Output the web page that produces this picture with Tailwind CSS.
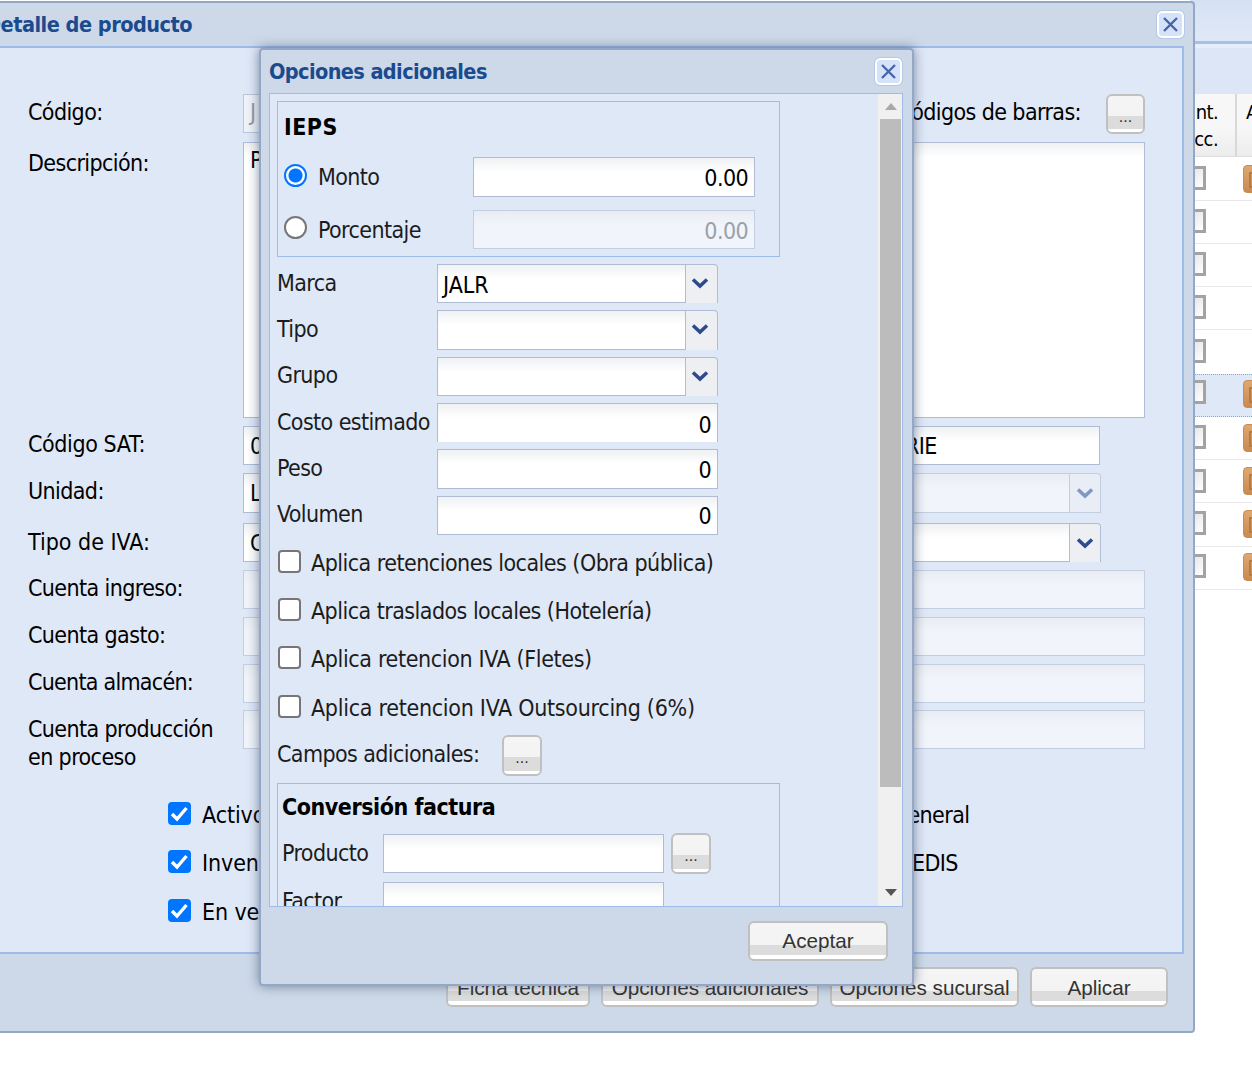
<!DOCTYPE html>
<html lang="es">
<head>
<meta charset="utf-8">
<title>Detalle de producto</title>
<script src="https://cdn.jsdelivr.net/npm/@tailwindcss/browser@4"></script>
</head>
<body class="bg-white">
<div class="relative w-[1252px] h-[1069px] overflow-hidden bg-white font-['DejaVu_Sans_Condensed','DejaVu_Sans',sans-serif] text-[23px] tracking-[-0.6px] text-black">

  <!-- background window -->
  <div class="absolute left-[1190px] top-0 w-[62px] h-[600px] flex flex-col">
    <div class="h-[41px] shrink-0 bg-[linear-gradient(#d5e1f2,#dfe8f7)]"></div>
    <div class="h-[3px] shrink-0 bg-[#a5c1e7]"></div>
    <div class="h-[4px] shrink-0 bg-[#e6eefa]"></div>
    <div class="h-[46px] shrink-0 bg-[#dce6f6]"></div>
    <div class="h-[63px] shrink-0 flex bg-[linear-gradient(#f7f7f7_0,#f7f7f7_55%,#ececec_100%)] border-b border-[#dcdcdc] text-[20px] leading-[27px]">
      <div class="w-[47px] shrink-0 border-r-2 border-[#d8d8d8] pt-[5px] text-right pr-[17px] overflow-hidden whitespace-nowrap">nt.<br>cc.</div>
      <div class="pl-[9px] pt-[5px] shrink-0">A</div>
    </div>
    <div class="h-[44px] shrink-0 flex items-center justify-between border-b border-[#e8e8e8]">
      <div class="w-[24px] h-[24px] -ml-[8px] -mt-[2px] border-[3px] border-[#a3a3a3] bg-[linear-gradient(135deg,#dedede,#fff)]"></div>
      <div class="w-[26px] h-[28px] -mr-[17px] rounded-[4px] bg-[linear-gradient(#dfa871,#c98a50)] border border-[#c88c55] pl-[5px] pt-[6px]"><div class="w-[12px] h-[16px] border-2 border-[#b57a45]"></div></div>
    </div>
    <div class="h-[43px] shrink-0 flex items-center border-b border-[#e8e8e8]"><div class="w-[24px] h-[24px] -ml-[8px] -mt-[3px] border-[3px] border-[#a3a3a3] bg-[linear-gradient(135deg,#dedede,#fff)]"></div></div>
    <div class="h-[43px] shrink-0 flex items-center border-b border-[#e8e8e8]"><div class="w-[24px] h-[24px] -ml-[8px] -mt-[2px] border-[3px] border-[#a3a3a3] bg-[linear-gradient(135deg,#dedede,#fff)]"></div></div>
    <div class="h-[43px] shrink-0 flex items-center border-b border-[#e8e8e8]"><div class="w-[24px] h-[24px] -ml-[8px] -mt-[2px] border-[3px] border-[#a3a3a3] bg-[linear-gradient(135deg,#dedede,#fff)]"></div></div>
    <div class="h-[44px] shrink-0 flex items-center"><div class="w-[24px] h-[24px] -ml-[8px] -mt-[3px] border-[3px] border-[#a3a3a3] bg-[linear-gradient(135deg,#dedede,#fff)]"></div></div>
    <div class="h-[43px] shrink-0 flex items-center justify-between bg-[#dfe8f7] border-y border-dotted border-[#8fa6cc]">
      <div class="w-[24px] h-[24px] -ml-[8px] -mt-[8px] border-[3px] border-[#a3a3a3] bg-[linear-gradient(135deg,#dedede,#fff)]"></div>
      <div class="w-[26px] h-[28px] -mr-[17px] -mt-[4px] rounded-[4px] bg-[linear-gradient(#dfa871,#c98a50)] border border-[#c88c55] pl-[5px] pt-[6px]"><div class="w-[12px] h-[16px] border-2 border-[#b57a45]"></div></div>
    </div>
    <div class="h-[43px] shrink-0 flex items-center justify-between border-b border-[#e8e8e8]">
      <div class="w-[24px] h-[24px] -ml-[8px] -mt-[2px] border-[3px] border-[#a3a3a3] bg-[linear-gradient(135deg,#dedede,#fff)]"></div>
      <div class="w-[26px] h-[28px] -mr-[17px] rounded-[4px] bg-[linear-gradient(#dfa871,#c98a50)] border border-[#c88c55] pl-[5px] pt-[6px]"><div class="w-[12px] h-[16px] border-2 border-[#b57a45]"></div></div>
    </div>
    <div class="h-[43px] shrink-0 flex items-center justify-between border-b border-[#e8e8e8]">
      <div class="w-[24px] h-[24px] -ml-[8px] border-[3px] border-[#a3a3a3] bg-[linear-gradient(135deg,#dedede,#fff)]"></div>
      <div class="w-[26px] h-[28px] -mr-[17px] rounded-[4px] bg-[linear-gradient(#dfa871,#c98a50)] border border-[#c88c55] pl-[5px] pt-[6px]"><div class="w-[12px] h-[16px] border-2 border-[#b57a45]"></div></div>
    </div>
    <div class="h-[44px] shrink-0 flex items-center justify-between border-b border-[#e8e8e8]">
      <div class="w-[24px] h-[24px] -ml-[8px] -mt-[4px] border-[3px] border-[#a3a3a3] bg-[linear-gradient(135deg,#dedede,#fff)]"></div>
      <div class="w-[26px] h-[28px] -mr-[17px] -mt-[2px] rounded-[4px] bg-[linear-gradient(#dfa871,#c98a50)] border border-[#c88c55] pl-[5px] pt-[6px]"><div class="w-[12px] h-[16px] border-2 border-[#b57a45]"></div></div>
    </div>
    <div class="h-[43px] shrink-0 flex items-center justify-between border-b border-[#e8e8e8]">
      <div class="w-[24px] h-[24px] -ml-[8px] -mt-[4px] border-[3px] border-[#a3a3a3] bg-[linear-gradient(135deg,#dedede,#fff)]"></div>
      <div class="w-[26px] h-[28px] -mr-[17px] -mt-[2px] rounded-[4px] bg-[linear-gradient(#dfa871,#c98a50)] border border-[#c88c55] pl-[5px] pt-[6px]"><div class="w-[12px] h-[16px] border-2 border-[#b57a45]"></div></div>
    </div>
  </div>

  <!-- main window -->
  <div class="absolute left-[-8px] top-px w-[1203px] h-[1032px] flex flex-col bg-[#cdd9e8] border-2 border-[#93a7c6] rounded-[4px]">
    <div class="h-[43px] shrink-0 flex items-center justify-between pr-[9px]">
      <span class="font-bold text-[#1b4a8e] text-[21.5px] -ml-[9px] tracking-[-0.5px] leading-none">Detalle de producto</span>
      <span class="w-[27px] h-[27px] flex items-center justify-center rounded-[5px] border-2 border-white bg-[#d5e3fa] outline outline-[#b7c9e6]">
        <svg width="17" height="17" viewBox="0 0 17 17"><path d="M2 2 L15 15 M15 2 L2 15" stroke="#4a64a8" stroke-width="2.4" fill="none"/></svg>
      </span>
    </div>
    <div class="ml-[6px] mr-[9px] h-[908px] shrink-0 bg-[#dfe8f7] border-2 border-[#9dbce8] border-l-0 pl-[28px] pt-[46px] pr-[37px] flex flex-col">
      <!-- 1 -->
      <div class="flex h-[40px] shrink-0">
        <div class="w-[215px] pt-[4px] leading-[28px]">Código:</div>
        <div class="w-[200px] h-[39px] border border-[#b9c6dc] bg-[#eef2f9] text-[#9a9a9a] pl-[6px] leading-[34px]">J</div>
        <div class="flex-1 flex justify-end items-start">
          <span class="pt-[4px] leading-[28px] mr-[25px]">Códigos de barras:</span>
          <button class="w-[39px] h-[40px] rounded-[6px] border-2 border-[#c0c0c0] bg-[linear-gradient(#f5f5f5_0,#f3f3f3_55%,#dcdcdc_55%,#dcdcdc_92%,#fff_92%)] font-['Liberation_Sans',sans-serif] tracking-normal text-[16px] text-[#333] leading-[36px] pt-[3px]">...</button>
        </div>
      </div>
      <!-- 2 -->
      <div class="flex h-[276px] shrink-0 mt-[8px]">
        <div class="w-[215px] pt-[7px] leading-[28px]">Descripción:</div>
        <div class="w-[200px] border border-[#b0bcd4] bg-[linear-gradient(#eff1f2,#fff_14px)] pl-[6px] leading-[34px]">Producto</div>
        <div class="flex-1 flex justify-end">
          <div class="w-[300px] border border-[#b0bcd4] bg-[linear-gradient(#eff1f2,#fff_14px)]"></div>
        </div>
      </div>
      <!-- 3 -->
      <div class="flex h-[39px] shrink-0 mt-[8px]">
        <div class="w-[215px] pt-[4px] leading-[28px] tracking-[-0.4px]">Código SAT:</div>
        <div class="w-[200px] border border-[#b0bcd4] bg-[linear-gradient(#eff1f2,#fff_14px)] pl-[6px] leading-[38px]">01010101</div>
        <div class="flex-1 flex justify-end pr-[45px]">
          <div class="w-[300px] border border-[#b0bcd4] bg-[linear-gradient(#eff1f2,#fff_14px)] pl-[79px] leading-[38px]">SERIE</div>
        </div>
      </div>
      <!-- 4 -->
      <div class="flex h-[40px] shrink-0 mt-[8px]">
        <div class="w-[215px] pt-[4px] leading-[28px]">Unidad:</div>
        <div class="w-[200px] border border-[#b0bcd4] bg-[linear-gradient(#eff1f2,#fff_14px)] pl-[6px] leading-[38px]">L</div>
        <div class="flex-1 flex justify-end pr-[44px]">
          <div class="w-[270px] border border-[#c3cee0] bg-[linear-gradient(#e9edf3,#f1f4fa_14px)]"></div>
          <div class="w-[31px] flex items-center justify-center rounded-tr-[4px] border border-l-0 border-[#c3cee0] bg-[#e9edf5]">
            <svg width="18" height="12" viewBox="0 0 18 12"><path d="M2 2.5 L9 9 L16 2.5" stroke="#7e97c4" stroke-width="3.5" fill="none"/></svg>
          </div>
        </div>
      </div>
      <!-- 5 -->
      <div class="flex h-[39px] shrink-0 mt-[10px]">
        <div class="w-[215px] pt-[5px] leading-[28px] tracking-normal">Tipo de IVA:</div>
        <div class="w-[200px] border border-[#b0bcd4] bg-[linear-gradient(#eff1f2,#fff_14px)] pl-[6px] leading-[38px]">C</div>
        <div class="flex-1 flex justify-end pr-[44px]">
          <div class="w-[270px] border border-[#b0bcd4] bg-[linear-gradient(#eff1f2,#fff_14px)]"></div>
          <div class="w-[31px] flex items-center justify-center rounded-tr-[4px] border-t border-r border-[#b0bcd4] bg-[#eeeff2]">
            <svg width="18" height="12" viewBox="0 0 18 12"><path d="M2 2.5 L9 9 L16 2.5" stroke="#2c4a8c" stroke-width="3.5" fill="none"/></svg>
          </div>
        </div>
      </div>
      <!-- 6-9 -->
      <div class="flex h-[39px] shrink-0 mt-[8px]">
        <div class="w-[215px] pt-[4px] leading-[28px]">Cuenta ingreso:</div>
        <div class="flex-1 border border-[#c3cee0] bg-[linear-gradient(#e9edf3,#f1f4fa_14px)]"></div>
      </div>
      <div class="flex h-[39px] shrink-0 mt-[8px]">
        <div class="w-[215px] pt-[4px] leading-[28px]">Cuenta gasto:</div>
        <div class="flex-1 border border-[#c3cee0] bg-[linear-gradient(#e9edf3,#f1f4fa_14px)]"></div>
      </div>
      <div class="flex h-[39px] shrink-0 mt-[8px]">
        <div class="w-[215px] pt-[4px] leading-[28px] tracking-[-0.75px]">Cuenta almacén:</div>
        <div class="flex-1 border border-[#c3cee0] bg-[linear-gradient(#e9edf3,#f1f4fa_14px)]"></div>
      </div>
      <div class="flex h-[39px] shrink-0 mt-[7px]">
        <div class="w-[215px] pt-[5px] leading-[28px]">Cuenta producción<br>en proceso</div>
        <div class="flex-1 border border-[#c3cee0] bg-[linear-gradient(#e9edf3,#f1f4fa_14px)]"></div>
      </div>
      <!-- checks -->
      <div class="flex flex-col mt-[53px] ml-[-28px] pl-[168px] leading-[28px]">
        <div class="flex h-[23px] items-center">
          <span class="w-[23px] h-[23px] shrink-0 rounded-[4px] bg-[#0075ff] flex items-center justify-center"><svg width="23" height="23" viewBox="0 0 23 23"><path d="M4 12 L9 17 L18.5 6" stroke="#fff" stroke-width="3.4" fill="none"/></svg></span>
          <span class="ml-[11px] mt-[3px] w-[690px] tracking-[-0.1px]">Activo</span><span class="mt-[3px]">General</span>
        </div>
        <div class="flex h-[23px] items-center mt-[25px]">
          <span class="w-[23px] h-[23px] shrink-0 rounded-[4px] bg-[#0075ff] flex items-center justify-center"><svg width="23" height="23" viewBox="0 0 23 23"><path d="M4 12 L9 17 L18.5 6" stroke="#fff" stroke-width="3.4" fill="none"/></svg></span>
          <span class="ml-[11px] mt-[3px] w-[710px] tracking-[-0.1px]">Inventario</span><span class="mt-[3px]">EDIS</span>
        </div>
        <div class="flex h-[23px] items-center mt-[26px]">
          <span class="w-[23px] h-[23px] shrink-0 rounded-[4px] bg-[#0075ff] flex items-center justify-center"><svg width="23" height="23" viewBox="0 0 23 23"><path d="M4 12 L9 17 L18.5 6" stroke="#fff" stroke-width="3.4" fill="none"/></svg></span>
          <span class="ml-[11px] mt-[3px] tracking-[-0.1px]">En venta</span>
        </div>
      </div>
    </div>
    <div class="flex justify-end gap-[11px] pr-[25px] mt-[13px] font-['Liberation_Sans',sans-serif] tracking-normal text-[20.7px] text-[#333]">
      <button class="w-[144px] h-[40px] rounded-[6px] border-2 border-[#c0c0c0] pt-px bg-[linear-gradient(#f5f5f5_0,#f3f3f3_60%,#dcdcdc_60%,#dcdcdc_90%,#fff_90%)]">Ficha técnica</button>
      <button class="w-[218px] h-[40px] rounded-[6px] border-2 border-[#c0c0c0] pt-px bg-[linear-gradient(#f5f5f5_0,#f3f3f3_60%,#dcdcdc_60%,#dcdcdc_90%,#fff_90%)]">Opciones adicionales</button>
      <button class="w-[189px] h-[40px] rounded-[6px] border-2 border-[#c0c0c0] pt-px bg-[linear-gradient(#f5f5f5_0,#f3f3f3_60%,#dcdcdc_60%,#dcdcdc_90%,#fff_90%)]">Opciones sucursal</button>
      <button class="w-[138px] h-[40px] rounded-[6px] border-2 border-[#c0c0c0] pt-px bg-[linear-gradient(#f5f5f5_0,#f3f3f3_60%,#dcdcdc_60%,#dcdcdc_90%,#fff_90%)]">Aplicar</button>
    </div>
  </div>

  <!-- modal -->
  <div class="absolute left-[259px] top-[48px] w-[655px] h-[938px] flex flex-col bg-[#cdd9e8] border-2 border-[#93a7c6] rounded-[4px] shadow-[0_0_12px_rgba(50,70,100,0.6)]">
    <div class="h-[43px] shrink-0 flex items-center justify-between pl-[8px] pr-[10px]">
      <span class="font-bold text-[#1b4a8e] text-[21.5px] leading-none">Opciones adicionales</span>
      <span class="w-[27px] h-[27px] flex items-center justify-center rounded-[5px] border-2 border-white bg-[#d5e3fa] outline outline-[#b7c9e6]">
        <svg width="17" height="17" viewBox="0 0 17 17"><path d="M2 2 L15 15 M15 2 L2 15" stroke="#4a64a8" stroke-width="2.4" fill="none"/></svg>
      </span>
    </div>
    <div class="ml-[8px] mr-[9px] h-[814px] shrink-0 flex border border-[#9dbce8] bg-[#dfe8f7] overflow-hidden">
      <!-- scroll content -->
      <div class="w-[608px] shrink-0 pl-[7px] pt-[7px] flex flex-col text-[#1c1c1c]">
        <div class="w-[503px] h-[156px] shrink-0 border border-[#9dbce8] pl-[6px] flex flex-col">
          <div class="font-bold text-black h-[25px] mt-[13px] leading-[25px] tracking-[0.5px]">IEPS</div>
          <div class="flex items-center h-[40px] mt-[17px]">
            <input type="radio" name="ieps" checked class="appearance-none shrink-0 w-[23px] h-[23px] m-0 -mt-[4px] rounded-full border-2 border-[#0075ff] bg-[radial-gradient(circle,#0075ff_6.5px,#fff_7.5px)]">
            <span class="ml-[11px] w-[155px]">Monto</span>
            <div class="w-[282px] h-[40px] border border-[#b0bcd4] bg-[linear-gradient(#eff1f2,#fff_14px)] text-right pr-[6px] leading-[40px] text-black">0.00</div>
          </div>
          <div class="flex items-center h-[39px] mt-[13px]">
            <input type="radio" name="ieps" class="appearance-none shrink-0 w-[23px] h-[23px] m-0 -mt-[4px] rounded-full border-2 border-[#767676] bg-white">
            <span class="ml-[11px] mt-px w-[155px]">Porcentaje</span>
            <div class="w-[282px] h-[39px] border border-[#c3cee0] bg-[linear-gradient(#e9edf3,#f1f4fa_14px)] text-right pr-[6px] leading-[40px] text-[#9aa0a8]">0.00</div>
          </div>
        </div>
        <div class="flex items-start h-[39px] mt-[7px] shrink-0">
          <span class="w-[160px] leading-[38px]">Marca</span>
          <div class="w-[249px] h-[39px] border border-[#b0bcd4] bg-[linear-gradient(#eff1f2,#fff_14px)] pl-[5px] leading-[40px] text-black tracking-normal">JALR</div>
          <div class="w-[32px] h-[39px] flex items-center justify-center pr-[4px] rounded-tr-[4px] border-t border-r border-[#b0bcd4] bg-[#eeeff2]"><svg width="18" height="12" viewBox="0 0 18 12" class="-mt-[3px]"><path d="M2 2.5 L9 9 L16 2.5" stroke="#2c4a8c" stroke-width="3.5" fill="none"/></svg></div>
        </div>
        <div class="flex items-start h-[40px] mt-[7px] shrink-0">
          <span class="w-[160px] leading-[38px]">Tipo</span>
          <div class="w-[249px] h-[40px] border border-[#b0bcd4] bg-[linear-gradient(#eff1f2,#fff_14px)]"></div>
          <div class="w-[32px] h-[40px] flex items-center justify-center pr-[4px] rounded-tr-[4px] border-t border-r border-[#b0bcd4] bg-[#eeeff2]"><svg width="18" height="12" viewBox="0 0 18 12" class="-mt-[3px]"><path d="M2 2.5 L9 9 L16 2.5" stroke="#2c4a8c" stroke-width="3.5" fill="none"/></svg></div>
        </div>
        <div class="flex items-start h-[39px] mt-[7px] shrink-0">
          <span class="w-[160px] leading-[36px]">Grupo</span>
          <div class="w-[249px] h-[39px] border border-[#b0bcd4] bg-[linear-gradient(#eff1f2,#fff_14px)]"></div>
          <div class="w-[32px] h-[39px] flex items-center justify-center pr-[4px] rounded-tr-[4px] border-t border-r border-[#b0bcd4] bg-[#eeeff2]"><svg width="18" height="12" viewBox="0 0 18 12" class="-mt-[3px]"><path d="M2 2.5 L9 9 L16 2.5" stroke="#2c4a8c" stroke-width="3.5" fill="none"/></svg></div>
        </div>
        <div class="flex items-start h-[39px] mt-[7px] shrink-0">
          <span class="w-[160px] leading-[38px] whitespace-nowrap">Costo estimado</span>
          <div class="w-[281px] h-[39px] border border-[#b0bcd4] border-b-0 bg-[linear-gradient(#eff1f2,#fff_14px)] text-right pr-[6px] leading-[42px] text-black">0</div>
        </div>
        <div class="flex items-start h-[40px] mt-[7px] shrink-0">
          <span class="w-[160px] leading-[38px]">Peso</span>
          <div class="w-[281px] h-[40px] border border-[#b0bcd4] bg-[linear-gradient(#eff1f2,#fff_14px)] text-right pr-[6px] leading-[40px] text-black">0</div>
        </div>
        <div class="flex items-start h-[39px] mt-[7px] shrink-0">
          <span class="w-[160px] leading-[36px]">Volumen</span>
          <div class="w-[281px] h-[39px] border border-[#b0bcd4] bg-[linear-gradient(#eff1f2,#fff_14px)] text-right pr-[6px] leading-[38px] text-black">0</div>
        </div>
        <label class="flex items-center h-[23px] mt-[15px] shrink-0"><input type="checkbox" class="appearance-none shrink-0 w-[23px] h-[23px] m-0 ml-px rounded-[4px] border-2 border-[#767676] bg-white"><span class="ml-[10px] mt-[3px] tracking-[-0.52px]">Aplica retenciones locales (Obra pública)</span></label>
        <label class="flex items-center h-[23px] mt-[25px] shrink-0"><input type="checkbox" class="appearance-none shrink-0 w-[23px] h-[23px] m-0 ml-px rounded-[4px] border-2 border-[#767676] bg-white"><span class="ml-[10px] mt-[3px] tracking-[-0.54px]">Aplica traslados locales (Hotelería)</span></label>
        <label class="flex items-center h-[23px] mt-[25px] shrink-0"><input type="checkbox" class="appearance-none shrink-0 w-[23px] h-[23px] m-0 ml-px rounded-[4px] border-2 border-[#767676] bg-white"><span class="ml-[10px] mt-[3px] tracking-[-0.36px]">Aplica retencion IVA (Fletes)</span></label>
        <label class="flex items-center h-[23px] mt-[26px] shrink-0"><input type="checkbox" class="appearance-none shrink-0 w-[23px] h-[23px] m-0 ml-px rounded-[4px] border-2 border-[#767676] bg-white"><span class="ml-[10px] mt-[3px] tracking-[-0.28px]">Aplica retencion IVA Outsourcing (6%)</span></label>
        <div class="flex items-center h-[41px] mt-[17px] shrink-0">
          <span class="w-[225px] -mt-[2px]">Campos adicionales:</span>
          <button class="w-[40px] h-[41px] rounded-[6px] border-2 border-[#c0c0c0] bg-[linear-gradient(#f5f5f5_0,#f3f3f3_55%,#dcdcdc_55%,#dcdcdc_92%,#fff_92%)] font-['Liberation_Sans',sans-serif] tracking-normal text-[16px] text-[#333] leading-[36px] pt-[3px]">...</button>
        </div>
        <div class="w-[503px] h-[200px] mt-[7px] shrink-0 border border-[#9dbce8] pl-[4px] flex flex-col">
          <div class="font-bold text-black h-[25px] mt-[11px] leading-[25px] tracking-[-0.45px]">Conversión factura</div>
          <div class="flex items-center h-[41px] mt-[13px]">
            <span class="w-[101px]">Producto</span>
            <div class="w-[281px] h-[39px] border border-[#b0bcd4] bg-[linear-gradient(#eff1f2,#fff_14px)]"></div>
            <button class="ml-[7px] w-[40px] h-[41px] rounded-[6px] border-2 border-[#c0c0c0] bg-[linear-gradient(#f5f5f5_0,#f3f3f3_55%,#dcdcdc_55%,#dcdcdc_92%,#fff_92%)] font-['Liberation_Sans',sans-serif] tracking-normal text-[16px] text-[#333] leading-[36px] pt-[3px]">...</button>
          </div>
          <div class="flex items-start h-[40px] mt-[8px]">
            <span class="w-[101px] leading-[38px]">Factor</span>
            <div class="w-[281px] h-[39px] border border-[#b0bcd4] bg-[linear-gradient(#eff1f2,#fff_14px)]"></div>
          </div>
        </div>
      </div>
      <!-- scrollbar -->
      <div class="w-[25px] shrink-0 bg-[#f0f0f0] flex flex-col items-center">
        <div class="h-[25px] w-full flex items-center justify-center shrink-0"><svg width="12" height="7" viewBox="0 0 12 7"><path d="M6 0 L12 7 L0 7 Z" fill="#a8a8a8"/></svg></div>
        <div class="w-[21px] h-[668px] -ml-[1px] shrink-0 bg-[#bcbcbc]"></div>
        <div class="flex-1 w-full flex items-end justify-center pb-[10px]"><svg width="12" height="7" viewBox="0 0 12 7"><path d="M0 0 L12 0 L6 7 Z" fill="#555"/></svg></div>
      </div>
    </div>
    <div class="flex justify-end pr-[24px] mt-[14px] font-['Liberation_Sans',sans-serif] tracking-normal text-[20.7px] text-[#333]">
      <button class="w-[140px] h-[40px] rounded-[6px] border-2 border-[#c0c0c0] bg-[linear-gradient(#f5f5f5_0,#f3f3f3_60%,#dcdcdc_60%,#dcdcdc_90%,#fff_90%)]">Aceptar</button>
    </div>
  </div>
</div>
</body>
</html>
